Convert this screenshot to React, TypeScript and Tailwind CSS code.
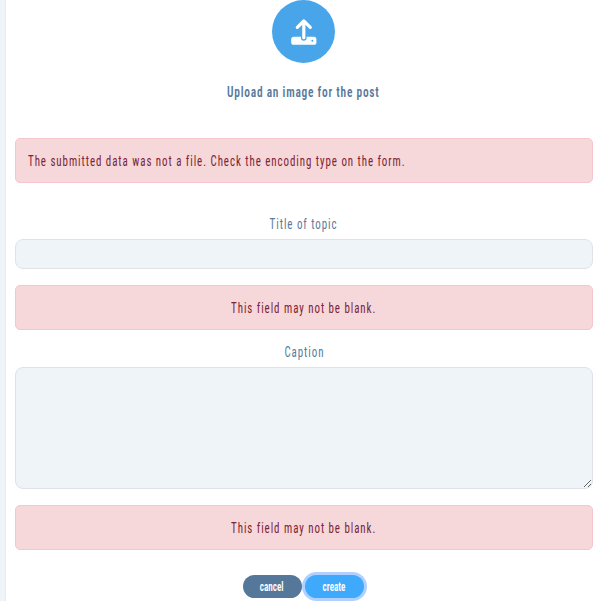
import type { ReactNode } from "react";

const condensed = "inline-block whitespace-nowrap font-['Roboto_Condensed','Liberation_Sans_Narrow','Roboto',sans-serif]";
const body = `${condensed} scale-x-[0.729] font-[430] tracking-[1.3px]`;

function Alert({ children, className = "" }: { children: ReactNode; className?: string }) {
  return (
    <div className={`flex h-[45px] items-center rounded-[5px] border border-[#f5c6cb] bg-[#f6d7da] px-3 text-[#7b2433] ${className}`}>
      {children}
    </div>
  );
}

export default function App() {
  return (
    <div className="flex h-[601px] w-[600px] overflow-hidden bg-white text-[15px] leading-[20px]">
      <div className="w-[6px] shrink-0 border-r border-[#e6ebf0] bg-[#eff4f8]" />
      <form className="flex w-[587px] flex-col pl-[9px]" onSubmit={(e) => e.preventDefault()}>
        <div className="flex h-[63px] justify-center pr-px">
          <div className="flex size-[63px] shrink-0 items-center justify-center rounded-full bg-[#49a5e9]">
            <svg width="26" height="28" viewBox="0 0 26 28" fill="none">
              <rect x="0.2" y="18.8" width="25.2" height="8" rx="2.6" fill="white" />
              <path d="M12.8 20V4" stroke="#49a5e9" strokeWidth="5.6" strokeLinecap="round" />
              <path d="M12.8 19.7V3.5M6.3 9.3L12.8 3L19.3 9.3" stroke="white" strokeWidth="3.2" strokeLinecap="round" strokeLinejoin="round" />
              <circle cx="21.4" cy="22.8" r="1" fill="#49a5e9" />
            </svg>
          </div>
        </div>
        <div className="mt-[18px] h-5 pr-px text-center font-semibold text-[#587a9b]">
          <span className={`${condensed} scale-x-[0.76] tracking-[1px]`}>Upload an image for the post</span>
        </div>
        <Alert className="mt-[37px]">
          <span className={`${body} origin-left`}>
            The submitted data was not a file. Check the encoding type on the form.
          </span>
        </Alert>
        <label htmlFor="title" className="mt-[30px] h-5 text-center text-[#587a9b]">
          <span className={body}>Title of topic</span>
        </label>
        <input id="title" className="mt-[6px] h-[30px] w-full rounded-[8px] border border-[#dfe3e8] bg-[#eff4f8] px-3 outline-none" />
        <Alert className="mt-4 justify-center">
          <span className={body}>This field may not be blank.</span>
        </Alert>
        <label htmlFor="caption" className="mt-[11px] h-5 text-center text-[#587a9b]">
          <span className={body}>Caption</span>
        </label>
        <textarea id="caption" className="mt-[6px] h-[122px] w-full shrink-0 resize rounded-[8px] border border-[#dfe0e8] bg-[#eff4f8] px-3 outline-none" />
        <Alert className="mt-4 justify-center">
          <span className={body}>This field may not be blank.</span>
        </Alert>
        <div className="mt-[25px] flex justify-center gap-[3px] pr-[2px] text-[12px] font-semibold text-white">
          <button type="button" className="h-[23px] w-[59px] rounded-full bg-[#557799]">
            <span className={`${condensed} scale-x-[0.76]`}>cancel</span>
          </button>
          <button type="submit" className="h-[23px] w-[59px] rounded-full bg-[#3fa9fb] ring-3 ring-[#b0d0ff]">
            <span className={`${condensed} scale-x-[0.76]`}>create</span>
          </button>
        </div>
      </form>
    </div>
  );
}
